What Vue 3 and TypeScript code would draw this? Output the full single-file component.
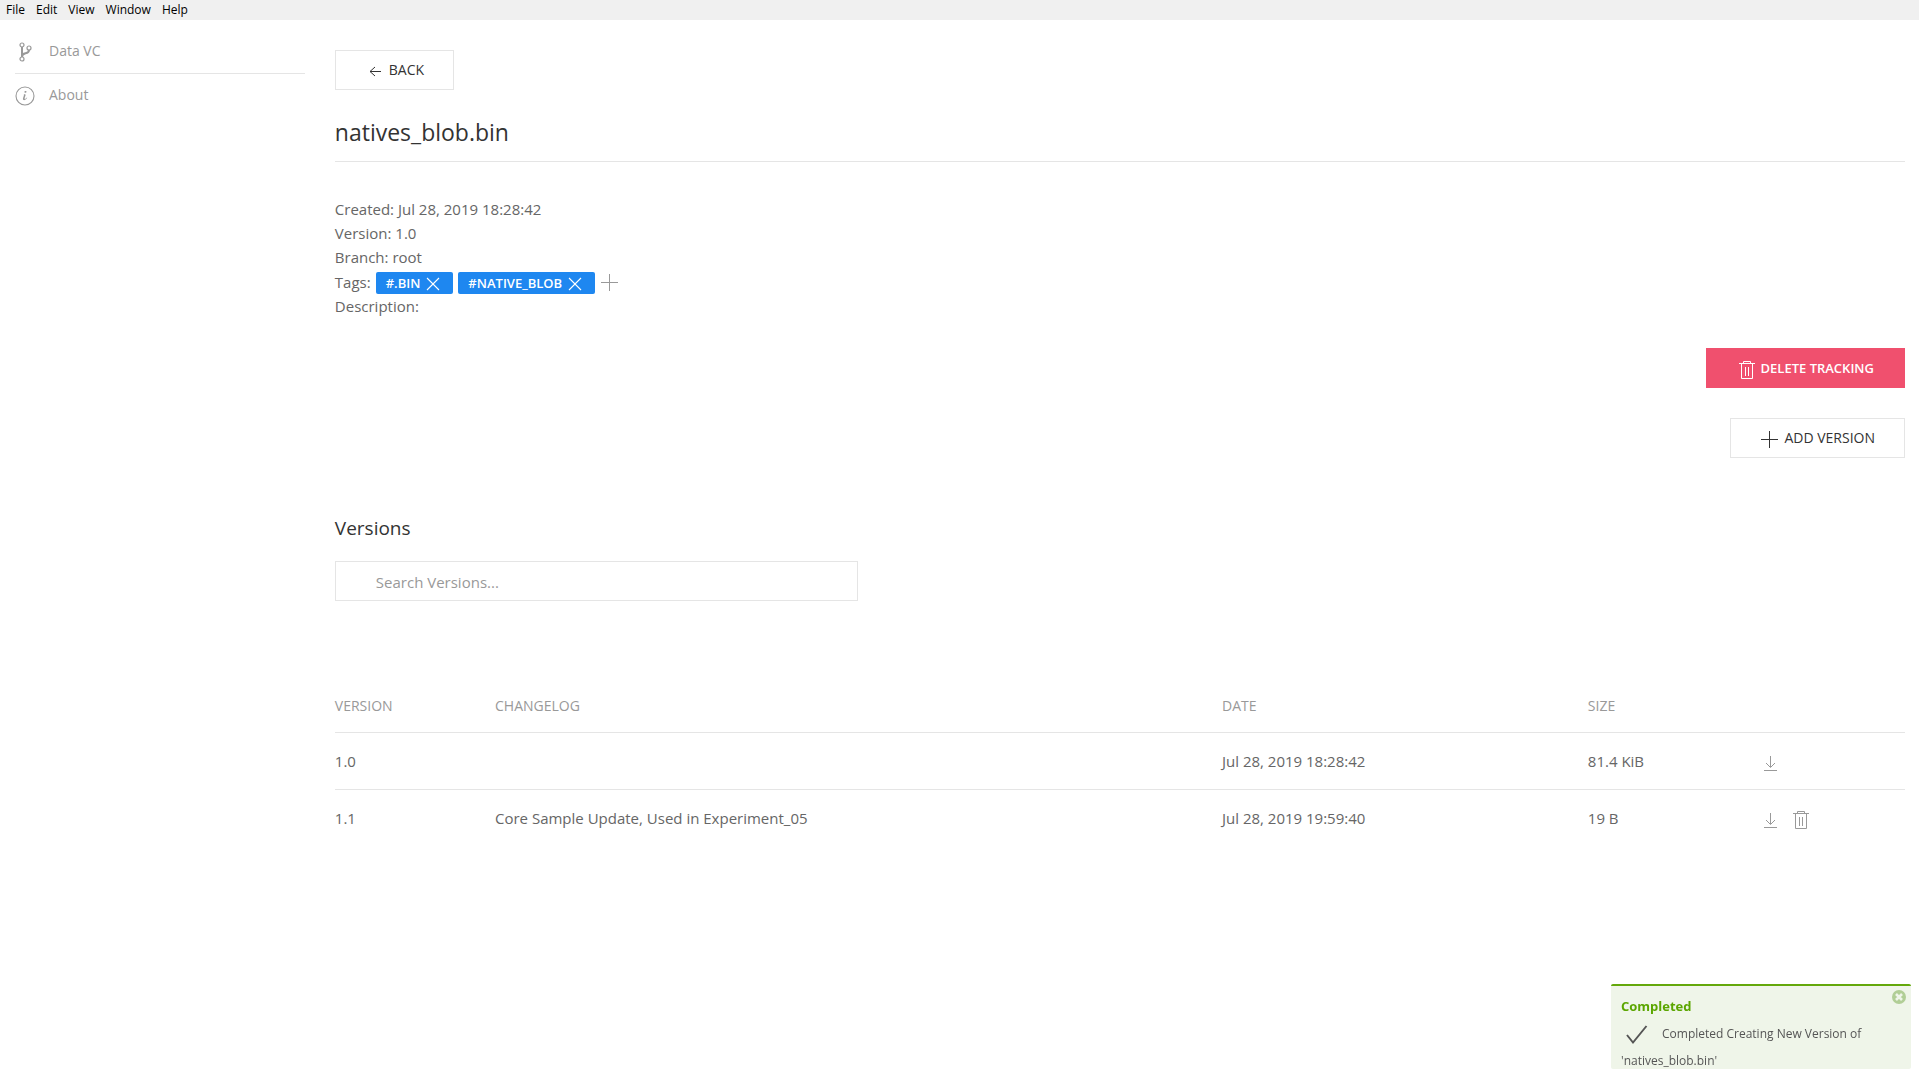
<script setup lang="ts">
import { ref } from 'vue'

interface Version {
  id: string
  changelog: string
  date: string
  size: string
  removable: boolean
}

const menu = ['File', 'Edit', 'View', 'Window', 'Help']
const tags = ref<string[]>(['#.BIN', '#NATIVE_BLOB'])
const query = ref('')
const toastOpen = ref(true)
const versions: Version[] = [
  { id: '1.0', changelog: '', date: 'Jul 28, 2019 18:28:42', size: '81.4 KiB', removable: false },
  { id: '1.1', changelog: 'Core Sample Update, Used in Experiment_05', date: 'Jul 28, 2019 19:59:40', size: '19 B', removable: true },
]

function removeTag(tag: string): void {
  tags.value = tags.value.filter((t) => t !== tag)
}
</script>

<template>
  <div class="app">
    <nav class="menubar" aria-label="Application menu">
      <button v-for="item in menu" :key="item" type="button">{{ item }}</button>
    </nav>

    <div class="layout">
      <aside class="sidebar">
        <a href="#data" class="nav-link">
          <svg class="icon" viewBox="0 0 20 20">
            <g fill="none" stroke="currentColor" stroke-width="1.2">
              <circle cx="7" cy="3" r="2" />
              <circle cx="14" cy="6" r="2" />
              <circle cx="7" cy="17" r="2" />
            </g>
            <path fill="none" stroke="currentColor" stroke-width="2" d="M14,8 C14,10.41 12.43,10.87 10.56,11.25 C9.09,11.54 7,12.06 7,15 L7,5" />
          </svg>
          <span>Data VC</span>
        </a>
        <a href="#about" class="nav-link">
          <svg class="icon" viewBox="0 0 20 20">
            <path fill="currentColor" d="M12.13,11.59 C11.97,12.84 10.35,14.12 9.1,14.16 C6.17,14.2 9.89,9.46 8.74,8.37 C9.3,8.16 10.62,7.83 10.62,8.81 C10.62,9.63 10.12,10.55 9.88,11.32 C8.66,15.16 12.13,11.15 12.14,11.18 C12.16,11.21 12.16,11.35 12.13,11.59 Z M11.56,5.67 C11.56,6.67 9.36,7.15 9.36,6.03 C9.36,5 11.56,4.54 11.56,5.67 Z" />
            <circle fill="none" stroke="currentColor" stroke-width="1.1" cx="10" cy="10" r="9" />
          </svg>
          <span>About</span>
        </a>
      </aside>

      <main class="content">
        <button type="button" class="button">
          <svg class="icon" viewBox="0 0 20 20" fill="none" stroke="currentColor">
            <polyline points="10 14 5 9.5 10 5" />
            <line x1="16" y1="9.5" x2="5" y2="9.5" />
          </svg>
          <span>BACK</span>
        </button>

        <h1>natives_blob.bin</h1>

        <div class="info">
          <div>Created: Jul 28, 2019 18:28:42</div>
          <div>Version: 1.0</div>
          <div>Branch: root</div>
          <div class="tags">
            <span>Tags:</span>
            <span v-for="tag in tags" :key="tag" class="tag">
              <span>{{ tag }}</span>
              <button type="button" class="icon-button" :aria-label="'Remove ' + tag" @click="removeTag(tag)">
                <svg class="icon" viewBox="0 0 20 20" fill="none" stroke="currentColor" stroke-width="1.1">
                  <path d="M16,16 L4,4" />
                  <path d="M16,4 L4,16" />
                </svg>
              </button>
            </span>
            <button type="button" class="icon-button muted" aria-label="Add tag">
              <svg class="icon" viewBox="0 0 20 20" fill="currentColor">
                <rect x="9" y="1" width="1" height="17" />
                <rect x="1" y="9" width="17" height="1" />
              </svg>
            </button>
          </div>
          <div>Description:</div>
        </div>

        <div class="actions">
          <button type="button" class="button danger">
            <svg class="icon" viewBox="0 0 20 20" fill="none" stroke="currentColor">
              <polyline points="6.5 3 6.5 1.5 13.5 1.5 13.5 3" />
              <polyline points="4.5 4 4.5 18.5 15.5 18.5 15.5 4" />
              <g fill="currentColor" stroke="none">
                <rect x="8" y="7" width="1" height="9" />
                <rect x="11" y="7" width="1" height="9" />
                <rect x="2" y="3" width="16" height="1" />
              </g>
            </svg>
            <span>DELETE TRACKING</span>
          </button>
          <button type="button" class="button">
            <svg class="icon" viewBox="0 0 20 20" fill="currentColor">
              <rect x="9" y="1" width="1" height="17" />
              <rect x="1" y="9" width="17" height="1" />
            </svg>
            <span>ADD VERSION</span>
          </button>
        </div>

        <h2>Versions</h2>
        <input v-model="query" class="search" type="text" placeholder="Search Versions..." aria-label="Search versions" />

        <table>
          <colgroup>
            <col class="col-version" />
            <col class="col-changelog" />
            <col class="col-date" />
            <col class="col-size" />
            <col />
          </colgroup>
          <thead>
            <tr>
              <th scope="col">VERSION</th>
              <th scope="col">CHANGELOG</th>
              <th scope="col">DATE</th>
              <th scope="col">SIZE</th>
              <td></td>
            </tr>
          </thead>
          <tbody>
            <tr v-for="version in versions" :key="version.id">
              <td>{{ version.id }}</td>
              <td>{{ version.changelog }}</td>
              <td>{{ version.date }}</td>
              <td>{{ version.size }}</td>
              <td>
                <div class="row-actions">
                  <button type="button" class="icon-button muted" aria-label="Download">
                    <svg class="icon" viewBox="0 0 20 20" fill="none" stroke="currentColor">
                      <polyline points="14,10 9.5,14.5 5,10" />
                      <line x1="9.5" y1="14" x2="9.5" y2="3" />
                      <rect x="3" y="17" width="13" height="1" fill="currentColor" stroke="none" />
                    </svg>
                  </button>
                  <button v-if="version.removable" type="button" class="icon-button muted" aria-label="Delete">
                    <svg class="icon" viewBox="0 0 20 20" fill="none" stroke="currentColor">
                      <polyline points="6.5 3 6.5 1.5 13.5 1.5 13.5 3" />
                      <polyline points="4.5 4 4.5 18.5 15.5 18.5 15.5 4" />
                      <g fill="currentColor" stroke="none">
                        <rect x="8" y="7" width="1" height="9" />
                        <rect x="11" y="7" width="1" height="9" />
                        <rect x="2" y="3" width="16" height="1" />
                      </g>
                    </svg>
                  </button>
                </div>
              </td>
            </tr>
          </tbody>
        </table>
      </main>
    </div>

    <div v-if="toastOpen" class="toast" role="status">
      <button type="button" class="toast-close" aria-label="Close" @click="toastOpen = false">
        <svg viewBox="0 0 14 14">
          <circle cx="7" cy="7" r="7" fill="#b1ce96" />
          <path d="M4,4 L10,10 M10,4 L4,10" stroke="#eff5e9" stroke-width="2.6" />
        </svg>
      </button>
      <strong>Completed</strong>
      <p>
        <svg class="check" viewBox="0 0 20 20" fill="none" stroke="currentColor" stroke-width="1.3">
          <polyline points="4,10 8,15 17,4" />
        </svg>Completed Creating New Version of 'natives_blob.bin'
      </p>
    </div>
  </div>
</template>

<style>
body {
  margin: 0;
  background: #fff;
}
</style>

<style scoped>
.app {
  font-family: "Open Sans", "Noto Sans", sans-serif;
  font-size: 15px;
  line-height: 24px;
  color: #666;
}

button {
  font: inherit;
  color: inherit;
  background: none;
  border: 0;
  padding: 0;
  cursor: pointer;
}

.icon {
  display: block;
  width: 20px;
  height: 20px;
  flex: none;
}

.menubar {
  display: flex;
  gap: 11px;
  height: 20px;
  padding: 0 6px;
  background: #f0f0f0;
  color: #000;
  font-size: 12px;
  line-height: 20px;
}

.layout {
  display: grid;
  grid-template-columns: 1fr 5fr;
}

.sidebar {
  padding: 10px 15px;
}

.nav-link {
  display: flex;
  align-items: center;
  gap: 14px;
  height: 43px;
  color: #999;
  font-size: 14px;
  line-height: 22px;
  text-decoration: none;
}

.nav-link + .nav-link {
  border-top: 1px solid #e5e5e5;
}

.nav-link span {
  padding-bottom: 2px;
}

.nav-link .icon {
  margin-top: 1px;
}

.content {
  min-width: 0;
  padding: 30px 14px 30px 15px;
}

.button {
  display: flex;
  align-items: center;
  gap: 4px;
  height: 40px;
  padding: 0 29px;
  border: 1px solid #e5e5e5;
  background: #fff;
  color: #333;
  font-size: 14px;
}

.button .icon {
  margin-top: 3px;
}

.button.danger {
  padding: 0 30px;
  background: #f0506e;
  border-color: #f0506e;
  color: #fff;
  font-size: 13px;
  font-weight: 600;
}

h1,
h2 {
  margin: 0;
  color: #333;
  font-weight: 400;
}

h1 {
  margin-top: 25px;
  padding-bottom: 12px;
  border-bottom: 1px solid #e5e5e5;
  font-size: 23px;
  line-height: 34px;
}

.info {
  margin-top: 35px;
}

.tags {
  display: flex;
  align-items: center;
  gap: 5px;
  height: 25px;
}

.tags .icon {
  margin-top: 2px;
}

.tag {
  display: flex;
  align-items: center;
  gap: 3px;
  height: 22px;
  margin-top: 2px;
  padding: 0 10px;
  border-radius: 2px;
  background: #1e87f0;
  color: #fff;
  font-size: 13px;
  font-weight: 600;
}

.icon-button {
  display: block;
}

.muted {
  color: #999;
}

.actions {
  display: flex;
  flex-direction: column;
  align-items: flex-end;
  gap: 30px;
  margin-top: 30px;
}

h2 {
  margin-top: 56px;
  font-size: 19px;
  line-height: 28px;
}

.search {
  display: block;
  box-sizing: border-box;
  width: 33.3%;
  height: 40px;
  margin-top: 19px;
  padding: 2px 40px 0;
  border: 1px solid #e5e5e5;
  background: #fff;
  color: #666;
  font: inherit;
}

.search::placeholder {
  color: #999;
  opacity: 1;
}

table {
  width: 100%;
  margin-top: 78px;
  table-layout: fixed;
  border-collapse: collapse;
}

.col-version {
  width: 10.2%;
}

.col-changelog {
  width: 46.3%;
}

.col-date {
  width: 23.3%;
}

.col-size {
  width: 11%;
}

th,
td {
  padding: 16px 0;
  text-align: left;
  vertical-align: middle;
}

th {
  color: #999;
  font-size: 14px;
  font-weight: 400;
  line-height: 21px;
}

tbody tr {
  border-top: 1px solid #e5e5e5;
}

.row-actions {
  display: flex;
  gap: 10px;
  padding-top: 4px;
}

.toast {
  position: fixed;
  right: 8px;
  bottom: 10px;
  box-sizing: border-box;
  width: 300px;
  height: 85px;
  padding: 7px 10px 0;
  overflow: hidden;
  border-top: 2px solid #64a80b;
  border-radius: 2px;
  background: #eff5e9;
  color: #555;
  font-size: 12px;
  line-height: 27px;
}

.toast strong {
  display: block;
  color: #5ba600;
  font-size: 13px;
}

.toast p {
  margin: 0;
}

.check {
  width: 30px;
  height: 30px;
  margin: -4px 11px -4px 0;
  vertical-align: middle;
}

.toast-close {
  position: absolute;
  top: 4px;
  right: 5px;
  width: 14px;
  height: 14px;
}

.toast-close svg {
  display: block;
}
</style>
